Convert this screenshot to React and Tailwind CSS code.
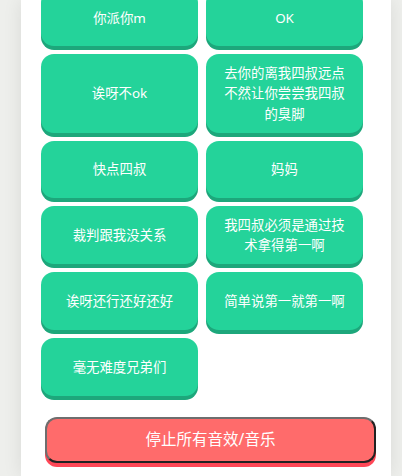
import React from "react";

const rows = [
  { h: "h-[56px]", items: ["你派你m", "OK"] },
  { h: "h-[79px]", items: ["诶呀不ok", "去你的离我四叔远点不然让你尝尝我四叔的臭脚"] },
  { h: "h-[57px]", items: ["快点四叔", "妈妈"] },
  { h: "h-[58px]", items: ["裁判跟我没关系", "我四叔必须是通过技术拿得第一啊"] },
  { h: "h-[58px]", items: ["诶呀还行还好还好", "简单说第一就第一啊"] },
  { h: "h-[58px]", items: ["毫无难度兄弟们"] },
];

function SoundButton({ label, h }) {
  return (
    <button
      className={`${h} w-full rounded-[13px] bg-[#24d39a] shadow-[0_4px_0_#1da77b] px-[15px] text-white text-[13.4px] leading-[20.5px] text-center`}
    >
      {label}
    </button>
  );
}

export default function App() {
  return (
    <div
      className="h-[476px] overflow-hidden bg-[#eeefec]"
      style={{ fontFamily: '"Noto Sans", "Noto Sans CJK SC", sans-serif' }}
    >
      <div className="ml-[21px] w-[370px] h-full flex flex-col bg-white shadow-[0_0_18px_rgba(0,0,0,0.09)]">
        <div className="-mt-[10px] pl-[20px] grid grid-cols-[157px_157px] gap-x-[8px] gap-y-[8px]">
          {rows.map((r, i) =>
            r.items.map((label, j) => (
              <SoundButton key={`${i}-${j}`} label={label} h={r.h} />
            ))
          )}
        </div>

        <div className="pl-[24px] mt-[21px]">
          <button className="w-[331px] h-[46px] rounded-[12px] bg-[#ff6b6b] border-2 border-t-[#6e6e6e] border-l-[#6e6e6e] border-b-[#222] border-r-[#222] shadow-[0_4px_0_#ff4757] text-white text-[15.5px]">
            停止所有音效/音乐
          </button>
        </div>
      </div>
    </div>
  );
}
